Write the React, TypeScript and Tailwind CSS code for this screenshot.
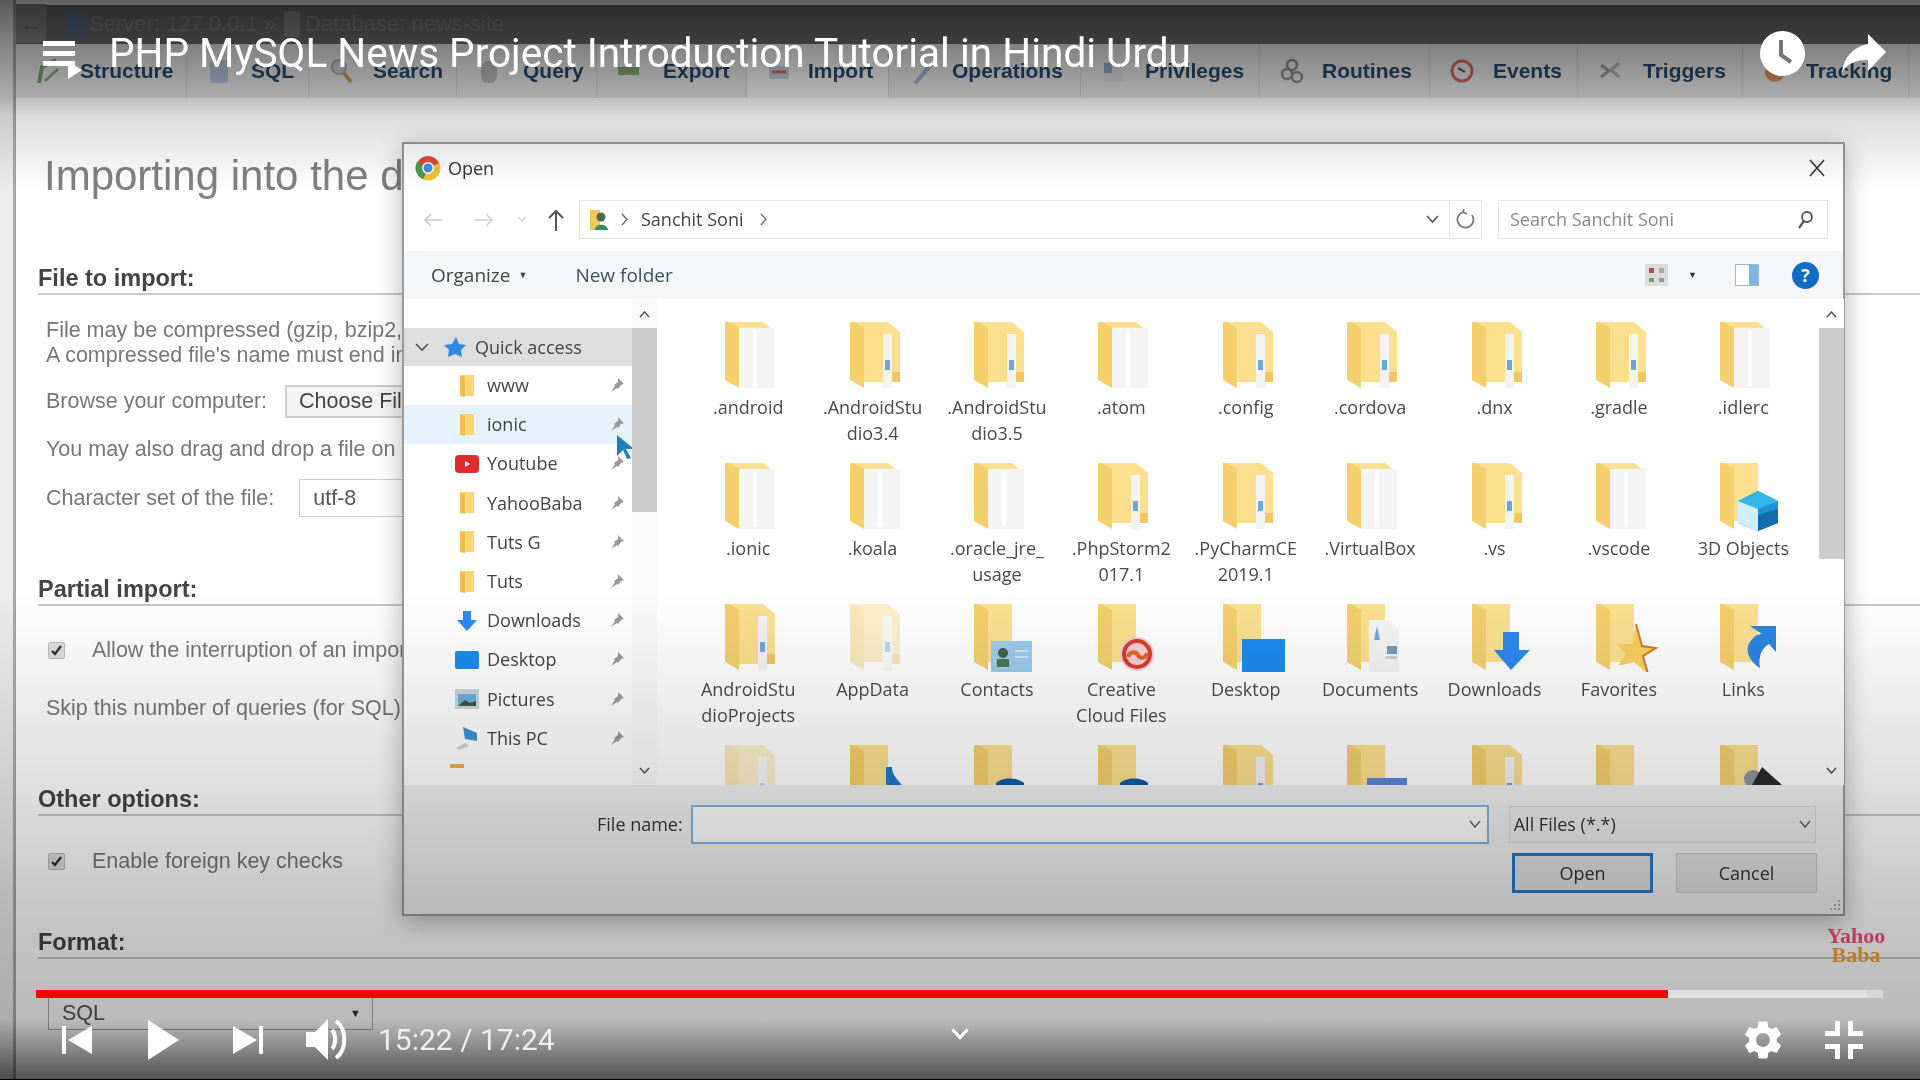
import React from "react";
import { MdSettings } from "react-icons/md";

type Kind =
  | "paper" | "strip" | "faded" | "contacts" | "cc" | "desktop" | "docs" | "down" | "star"
  | "link" | "cube" | "note" | "dome" | "bar" | "plain" | "dark";

const files: { name: string; kind: Kind }[] = [
  { name: ".android", kind: "paper" },
  { name: ".AndroidStu\ndio3.4", kind: "strip" },
  { name: ".AndroidStu\ndio3.5", kind: "strip" },
  { name: ".atom", kind: "paper" },
  { name: ".config", kind: "strip" },
  { name: ".cordova", kind: "strip" },
  { name: ".dnx", kind: "strip" },
  { name: ".gradle", kind: "strip" },
  { name: ".idlerc", kind: "paper" },
  { name: ".ionic", kind: "paper" },
  { name: ".koala", kind: "paper" },
  { name: ".oracle_jre_\nusage", kind: "paper" },
  { name: ".PhpStorm2\n017.1", kind: "strip" },
  { name: ".PyCharmCE\n2019.1", kind: "strip" },
  { name: ".VirtualBox", kind: "paper" },
  { name: ".vs", kind: "strip" },
  { name: ".vscode", kind: "paper" },
  { name: "3D Objects", kind: "cube" },
  { name: "AndroidStu\ndioProjects", kind: "strip" },
  { name: "AppData", kind: "faded" },
  { name: "Contacts", kind: "contacts" },
  { name: "Creative\nCloud Files", kind: "cc" },
  { name: "Desktop", kind: "desktop" },
  { name: "Documents", kind: "docs" },
  { name: "Downloads", kind: "down" },
  { name: "Favorites", kind: "star" },
  { name: "Links", kind: "link" },
  { name: "", kind: "faded" },
  { name: "", kind: "note" },
  { name: "", kind: "dome" },
  { name: "", kind: "dome" },
  { name: "", kind: "strip" },
  { name: "", kind: "bar" },
  { name: "", kind: "strip" },
  { name: "", kind: "plain" },
  { name: "", kind: "dark" },
];

const tabs = [
  { label: "Structure", w: "w-[171px]", ml: "ml-[20px]" },
  { label: "SQL", w: "w-[122px]", ml: "ml-[20px]" },
  { label: "Search", w: "w-[148px]", ml: "ml-[20px]" },
  { label: "Query", w: "w-[140px]", ml: "ml-[22px]" },
  { label: "Export", w: "w-[150px]", ml: "ml-[22px]" },
  { label: "Import", w: "w-[142px]", ml: "ml-[17px]", active: true },
  { label: "Operations", w: "w-[192px]", ml: "ml-[19px]" },
  { label: "Privileges", w: "w-[179px]", ml: "ml-[20px]" },
  { label: "Routines", w: "w-[170px]", ml: "ml-[18px]" },
  { label: "Events", w: "w-[148px]", ml: "ml-[19px]" },
  { label: "Triggers", w: "w-[165px]", ml: "ml-[21px]" },
  { label: "Tracking", w: "w-[166px]", ml: "ml-[19px]" },
];

const quick = ["www", "ionic", "Youtube", "YahooBaba", "Tuts G", "Tuts", "Downloads", "Desktop", "Pictures", "This PC"];

function TabIcon({ name }: { name: string }) {
  return (
    <svg width="24" height="28" viewBox="0 0 24 28" className="shrink-0 opacity-80">
      {name === "Structure" && (
        <>
          <path d="M3 26L6 10L20 3" fill="none" stroke="#5d9a4a" strokeWidth="4" />
          <path d="M9 24L22 12" stroke="#7a9a70" strokeWidth="3" />
        </>
      )}
      {name === "SQL" && <rect x="3" y="3" width="18" height="23" rx="4" fill="#a8bcdc" />}
      {name === "Search" && (
        <>
          <circle cx="10" cy="10" r="7" fill="#c8d0d8" stroke="#999" strokeWidth="2" />
          <path d="M15 16L22 25" stroke="#d09038" strokeWidth="4" />
        </>
      )}
      {name === "Query" && <rect x="4" y="4" width="16" height="22" rx="7" fill="#b0b0b0" />}
      {name === "Export" && (
        <>
          <path d="M1 10H22V18H1Z" fill="#63a85a" />
          <path d="M5 14H19" stroke="#e05a4a" strokeWidth="2" />
        </>
      )}
      {name === "Import" && (
        <>
          <rect x="2" y="9" width="20" height="13" rx="2" fill="#b8c8e0" />
          <path d="M5 15H19" stroke="#e03a3a" strokeWidth="3" />
        </>
      )}
      {name === "Operations" && <path d="M4 26L20 6L23 10L8 27Z" fill="#8ea8d4" />}
      {name === "Privileges" && (
        <>
          <rect x="3" y="6" width="19" height="19" fill="#d8dce2" />
          <rect x="3" y="6" width="8" height="10" fill="#7f9cc8" />
        </>
      )}
      {name === "Routines" && (
        <>
          <circle cx="12" cy="8" r="5" fill="none" stroke="#777" strokeWidth="2.5" />
          <circle cx="7" cy="17" r="5" fill="none" stroke="#777" strokeWidth="2.5" />
          <circle cx="17" cy="20" r="5" fill="none" stroke="#777" strokeWidth="2.5" />
        </>
      )}
      {name === "Events" && (
        <>
          <circle cx="12" cy="14" r="10" fill="#eee" stroke="#d04848" strokeWidth="3" />
          <path d="M8 11L15 15" stroke="#444" strokeWidth="2.5" />
        </>
      )}
      {name === "Triggers" && (
        <>
          <path d="M3 8L11 14L3 20" fill="none" stroke="#8a8a8a" strokeWidth="3" />
          <path d="M21 6L13 13L21 20" fill="none" stroke="#a5a5a5" strokeWidth="3" />
        </>
      )}
      {name === "Tracking" && <circle cx="12" cy="15" r="10" fill="#d88040" />}
    </svg>
  );
}

function Folder({ kind }: { kind: Kind }) {
  const badge = !["paper", "strip", "faded"].includes(kind);
  return (
    <svg width="72" height="68" viewBox="0 0 72 68" className={kind === "faded" ? "opacity-45" : ""}>
      <path d={badge ? "M0 0H38V58H0Z" : "M0 0H38L50 10V58H0Z"} fill="#fbe08f" />
      {kind === "paper" && <path d="M14 6H50V66H14Z" fill="#f4f4f4" />}
      {kind === "paper" && <path d="M30 8V64" stroke="#ffffff" strokeWidth="4" />}
      {(kind === "strip" || kind === "faded") && (
        <>
          <path d="M33 12H42V66H33Z" fill="#f3f3f3" />
          <path d="M35 38H40V48H35Z" fill="#6ba8d8" />
          <path d="M42 50H50V60H42Z" fill="#f2c663" />
        </>
      )}
      <path d="M0 0H4L14 6V66L0 58Z" fill="#f4cf6c" />
      {kind === "strip" && <path d="M14 6H33V60H14Z" fill="#fbdf8c" />}
      {kind === "contacts" && (
        <>
          <rect x="17" y="37" width="41" height="32" fill="#9ccbec" />
          <circle cx="29" cy="49" r="5" fill="#46604a" />
          <rect x="23" y="55" width="12" height="8" fill="#3f7a55" />
          <rect x="41" y="46" width="13" height="2" fill="#cfe4f4" />
          <rect x="41" y="52" width="13" height="2" fill="#cfe4f4" />
        </>
      )}
      {kind === "cc" && (
        <>
          <circle cx="39" cy="50" r="17" fill="#f5d0d0" />
          <circle cx="39" cy="50" r="13" fill="none" stroke="#da3a32" strokeWidth="4" />
          <path d="M30 53c2-6 8-6 10-2s8 4 9-2" fill="none" stroke="#e8622c" strokeWidth="4" />
        </>
      )}
      {kind === "desktop" && <rect x="19" y="35" width="43" height="33" fill="#1d8cf0" />}
      {kind === "docs" && (
        <>
          <path d="M22 16H42L52 26V68H22Z" fill="#f4f4f4" />
          <path d="M30 22L27 36H33Z" fill="#6fa9dc" />
          <rect x="40" y="42" width="10" height="8" fill="#6f9cc0" />
          <rect x="38" y="52" width="12" height="3" fill="#d0d0d0" />
        </>
      )}
      {kind === "down" && <path d="M31 28H47V46H58L39 66L22 46H31Z" fill="#2c8af0" />}
      {kind === "star" && (
        <>
          <path d="M40 20L46 42L60 44L47 52L52 70L38 58L22 62L30 50L20 40L36 40Z" fill="#f8d060" />
          <path d="M40 20L46 42L60 44L47 52L52 70" fill="none" stroke="#d9792a" strokeWidth="2" />
        </>
      )}
      {kind === "link" && (
        <path d="M30 22H56V48L49 40C42 44 38 52 40 64C30 58 24 46 30 38C34 32 38 30 42 30L36 26Z" fill="#2c86e0" />
      )}
      {kind === "cube" && (
        <>
          <path d="M38 28L58 38V60L38 68L18 60V38Z" fill="#1a93d6" />
          <path d="M18 38L38 28L58 38L38 46Z" fill="#35b6ea" />
          <path d="M18 38L38 46V68L18 60Z" fill="#cfeefb" />
          <path d="M38 52L58 46V60L38 68Z" fill="#0f6fae" />
        </>
      )}
      {kind === "note" && <path d="M36 22H42C42 34 54 38 56 48H46C44 44 42 42 42 40V60H36Z" fill="#1f78cf" />}
      {kind === "dome" && <path d="M22 38C28 32 44 32 50 38V44H22Z" fill="#0d5ca8" />}
      {kind === "bar" && <rect x="20" y="33" width="40" height="8" fill="#5a86e0" />}
      {kind === "dark" && (
        <>
          <circle cx="33" cy="34" r="9" fill="#8a96a0" />
          <path d="M42 22L62 40H32Z" fill="#2a2a2a" />
        </>
      )}
    </svg>
  );
}

function Section({ title, cls }: { title: string; cls: string }) {
  return (
    <div className={`h-[42px] ml-[22px] flex items-end pb-[2px] border-b-2 border-[#c9c9c9] text-[23.5px] leading-[26px] font-bold text-[#444] ${cls}`}>
      {title}
    </div>
  );
}

function Check() {
  return (
    <span className="w-[17px] h-[17px] rounded-[2px] bg-[#dedede] border border-[#bbb] flex items-center justify-center">
      <svg width="13" height="13" viewBox="0 0 13 13">
        <path d="M2 7l3 3 6-8" fill="none" stroke="#333" strokeWidth="2.4" />
      </svg>
    </span>
  );
}

function Page() {
  return (
    <div className="flex h-full font-['Liberation_Sans',sans-serif]">
      <div className="w-[16px] shrink-0 bg-[#ececec] border-r-[3px] border-[#a8a8a8]" />
      <div className="flex-1 min-w-0 flex flex-col bg-white text-[21.5px] text-[#777]">
        <div className="h-[5px] bg-white" />
        <div className="h-[39px] flex items-center pb-[2px] bg-[#707070] text-[#888] text-[22px]">
          <div className="w-[30px] h-[39px] bg-[#8a8a8a] text-center text-[#666] leading-[39px]">←</div>
          <div className="w-[18px] h-[30px] ml-[22px] rounded-[3px] bg-[#5b7690]" />
          <span className="ml-[3px]">Server: 127.0.0.1</span>
          <span className="ml-[6px]">»</span>
          <div className="w-[16px] h-[26px] ml-[8px] rounded-[3px] bg-[#8d8d8d]" />
          <span className="ml-[5px]">Database: news-site</span>
        </div>
        <div className="h-[54px] flex bg-[#e9e9e9] text-[21px] font-bold text-[#274a70]">
          {tabs.map((t) => (
            <div
              key={t.label}
              className={`${t.w} pl-[20px] shrink-0 flex items-center border-r border-[#d5d5d5] ${t.active ? "bg-[#f6f6f6]" : ""}`}
            >
              <TabIcon name={t.label} />
              <span className={t.ml}>{t.label}</span>
            </div>
          ))}
        </div>
        <div className="h-[155px] pl-[28px] flex items-center text-[42px] text-[#808080]">Importing into the d</div>
        <Section title="File to import:" cls="" />
        <div className="mt-[23px] ml-[30px] leading-[25px] whitespace-nowrap">
          File may be compressed (gzip, bzip2,
          <br />
          A compressed file's name must end in
        </div>
        <div className="mt-[17px] ml-[30px] h-[33px] flex items-center">
          Browse your computer:
          <span className="ml-[18px] h-[33px] pl-[12px] pr-[10px] border-2 border-[#ccc] bg-[#f4f4f4] text-[#444] leading-[29px] whitespace-nowrap">Choose File</span>
        </div>
        <div className="mt-[19px] ml-[30px] h-[24px] leading-[24px] whitespace-nowrap">You may also drag and drop a file on</div>
        <div className="mt-[18px] ml-[30px] h-[38px] flex items-center">
          Character set of the file:
          <span className="ml-[25px] w-[200px] h-[38px] pl-[13px] border border-[#ccc] text-[#555] leading-[36px]">utf-8</span>
        </div>
        <Section title="Partial import:" cls="mt-[47px]" />
        <div className="mt-[32px] ml-[32px] h-[24px] flex items-center gap-[27px] whitespace-nowrap">
          <Check />
          Allow the interruption of an import
        </div>
        <div className="mt-[34px] ml-[30px] h-[24px] leading-[24px] whitespace-nowrap">Skip this number of queries (for SQL)</div>
        <Section title="Other options:" cls="mt-[54px]" />
        <div className="mt-[33px] ml-[32px] h-[24px] flex items-center gap-[27px]">
          <Check />
          Enable foreign key checks
        </div>
        <Section title="Format:" cls="mt-[44px]" />
        <div className="mt-[37px] ml-[32px] w-[325px] h-[34px] pl-[13px] pr-[11px] flex items-center justify-between border border-[#aaa] text-[#555]">
          SQL
          <span className="text-[11px] text-[#333]">▼</span>
        </div>
      </div>
    </div>
  );
}

function Dialog() {
  return (
    <div className="absolute left-[402px] top-[142px] w-[1443px] h-[774px] flex flex-col bg-white border-2 border-[#9a9a9a] shadow-[0_6px_24px_rgba(0,0,0,0.3)] font-['Open_Sans',sans-serif] text-[#444] text-[18px]">
      <div className="h-[48px] flex items-center pl-[11px] pr-[18px] shrink-0">
        <svg width="26" height="26" viewBox="0 0 26 26">
          <circle cx="13" cy="13" r="12" fill="#e0483a" />
          <path d="M13 13L24 8A12 12 0 0 1 8 24Z" fill="#f3c32f" />
          <path d="M13 13L8 24A12 12 0 0 1 2 7Z" fill="#4a9a4e" />
          <circle cx="13" cy="13" r="6" fill="#fff" />
          <circle cx="13" cy="13" r="4.5" fill="#4a8fe0" />
        </svg>
        <span className="ml-[7px] text-[#333]">Open</span>
        <svg className="ml-auto" width="16" height="18" viewBox="0 0 16 18">
          <path d="M1 1L15 17M15 1L1 17" stroke="#333" strokeWidth="1.6" />
        </svg>
      </div>
      <div className="h-[39px] mt-[8px] flex items-stretch shrink-0">
        <div className="w-[175px] flex items-center shrink-0">
          <svg className="ml-[19px]" width="20" height="14" viewBox="0 0 20 14">
            <path d="M19 7H2M8 1L2 7L8 13" fill="none" stroke="#c8c8c8" strokeWidth="1.6" />
          </svg>
          <svg className="ml-[31px]" width="20" height="14" viewBox="0 0 20 14">
            <path d="M1 7H18M12 1L18 7L12 13" fill="none" stroke="#d0d0d0" strokeWidth="1.6" />
          </svg>
          <svg className="ml-[23px]" width="10" height="7" viewBox="0 0 10 7">
            <path d="M1 1l4 4 4-4" fill="none" stroke="#d0d0d0" strokeWidth="1.5" />
          </svg>
          <svg className="ml-[20px]" width="18" height="24" viewBox="0 0 18 24">
            <path d="M9 23V3M2 10l7-7 7 7" fill="none" stroke="#555" strokeWidth="2" />
          </svg>
        </div>
        <div className="w-[903px] flex items-center border border-[#e6e6e6] shrink-0">
          <svg className="ml-[9px]" width="20" height="24" viewBox="0 0 20 24">
            <rect x="1" y="2" width="10" height="20" fill="#f0c860" />
            <circle cx="12" cy="9" r="4.5" fill="#4d6a50" />
            <path d="M6 22c0-7 12-7 13 0Z" fill="#3a8a68" />
          </svg>
          <svg className="ml-[12px]" width="8" height="13" viewBox="0 0 8 13">
            <path d="M1 1l5 5.5-5 5.5" fill="none" stroke="#666" strokeWidth="1.3" />
          </svg>
          <span className="ml-[12px]">Sanchit Soni</span>
          <svg className="ml-[16px]" width="8" height="13" viewBox="0 0 8 13">
            <path d="M1 1l5 5.5-5 5.5" fill="none" stroke="#666" strokeWidth="1.3" />
          </svg>
          <svg className="ml-auto mr-[10px]" width="13" height="9" viewBox="0 0 13 9">
            <path d="M1 1l5.5 6L12 1" fill="none" stroke="#555" strokeWidth="1.6" />
          </svg>
          <div className="w-[32px] h-full flex items-center justify-center border-l border-[#e6e6e6]">
            <svg width="20" height="22" viewBox="0 0 20 22">
              <path d="M7 3A8 8 0 1 0 16 6M7 3l1-3M7 3l4 2" fill="none" stroke="#777" strokeWidth="1.8" />
            </svg>
          </div>
        </div>
        <div className="w-[330px] ml-[16px] flex items-center justify-between pl-[11px] pr-[13px] border border-[#e6e6e6] text-[#888] shrink-0">
          Search Sanchit Soni
          <svg width="18" height="20" viewBox="0 0 18 20">
            <circle cx="11" cy="7" r="5" fill="none" stroke="#555" strokeWidth="1.8" />
            <path d="M8 11L3 18" stroke="#555" strokeWidth="2.2" />
          </svg>
        </div>
      </div>
      <div className="h-[48px] mt-[12px] flex items-center pl-[27px] pr-[24px] bg-[#f5f6f7] shrink-0 text-[19px]">
        <span>Organize</span>
        <span className="ml-[8px] text-[9px]">▼</span>
        <span className="ml-[48px] text-[#3b5068]">New folder</span>
        <div className="ml-auto w-[23px] h-[22px] bg-[#dcdcdc] grid grid-cols-2 gap-[5px] p-[4px]">
          <span className="bg-[#b05050]" />
          <span className="bg-[#aaa]" />
          <span className="bg-[#6f9f6f]" />
          <span className="bg-[#999]" />
        </div>
        <span className="ml-[20px] text-[9px] text-[#333]">▼</span>
        <div className="ml-[38px] w-[24px] h-[22px] flex border border-[#9ab8d0] bg-white">
          <span className="flex-1" />
          <span className="w-[9px] bg-[#7fb5e0]" />
        </div>
        <span className="ml-[33px] w-[27px] h-[27px] rounded-full bg-[#0f6cc7] text-white text-center text-[18px] leading-[27px] font-bold">?</span>
      </div>
      <div className="h-[486px] flex shrink-0">
        <div className="w-[228px] relative shrink-0 flex flex-col overflow-hidden pt-[29px] text-[18px]">
          <div className="h-[38px] flex items-center shrink-0 bg-[#dedede]">
            <svg className="ml-[11px]" width="14" height="9" viewBox="0 0 14 9">
              <path d="M1 1l6 6 6-6" fill="none" stroke="#555" strokeWidth="1.6" />
            </svg>
            <svg className="ml-[14px]" width="24" height="22" viewBox="0 0 24 22">
              <path d="M13 1l3 7 7 1-5 5 1 7-7-3-7 3 1-7-5-5 8-1Z" fill="#2e8ae6" />
            </svg>
            <span className="ml-[8px]">Quick access</span>
          </div>
          {quick.map((q) => (
            <div key={q} className={`h-[39.2px] flex items-center shrink-0 relative ${q === "ionic" ? "bg-[#e5f3ff]" : ""}`}>
              <span className="w-[30px] ml-[48px] flex justify-center">
                <QuickIcon name={q} />
              </span>
              <span className="ml-[5px]">{q}</span>
              <svg className="absolute left-[205px] top-[11px]" width="16" height="16" viewBox="0 0 16 16">
                <path d="M9 1l6 6-3 1-3 4-1-1-6 4 4-6-1-1 4-3Z" fill="#999" />
              </svg>
            </div>
          ))}
          <span className="w-[14px] h-[4px] ml-[46px] mt-[6px] shrink-0 bg-[#f0b040]" />
          <svg className="absolute left-[212px] top-[135px]" width="20" height="26" viewBox="0 0 20 26">
            <path d="M1 1L18 15H10L15 24L11 25L7 16L1 22Z" fill="#2580b8" />
          </svg>
        </div>
        <Scrollbar track="bg-[#fafafa]" thumb="top-[29px] h-[184px]" />
        <div className="w-[1162px] pl-[29px] pt-[23px] overflow-hidden shrink-0">
          <div className="grid grid-cols-[repeat(9,124.4px)] auto-rows-[141px] text-[18px] leading-[26px] text-center text-[#4a4a4a]">
            {files.map((f, i) => (
              <div key={i} className="flex flex-col items-center">
                <div className="w-[72px] pl-[9px] -mr-[8px]">
                  <Folder kind={f.kind} />
                </div>
                <div className="mt-[4px] whitespace-pre-line">{f.name}</div>
              </div>
            ))}
          </div>
        </div>
        <Scrollbar track="bg-white" thumb="top-[29px] h-[231px]" />
      </div>
      <div className="flex-1 relative bg-[#f0f0f0] pl-[193px]">
        <div className="flex items-center mt-[20px] h-[39px]">
          <span className="text-[#333]">File name:</span>
          <div className="w-[798px] ml-[8px] h-[39px] pr-[6px] flex items-center justify-end bg-white border-2 border-[#7eb4ea]">
            <Chevron />
          </div>
          <div className="w-[307px] ml-[20px] h-[37px] px-[4px] flex items-center justify-between bg-[#ececec] border border-[#d5d5d5] text-[#333]">
            All Files (*.*)
            <Chevron />
          </div>
        </div>
        <div className="flex mt-[9px] ml-[915px] gap-[23px]">
          <div className="w-[141px] h-[40px] flex items-center justify-center bg-[#e1e1e1] border-[3px] border-[#2a78c8] text-[#333]">Open</div>
          <div className="w-[141px] h-[40px] flex items-center justify-center bg-[#e1e1e1] border border-[#c8c8c8] text-[#333]">Cancel</div>
        </div>
        <svg className="absolute right-[2px] bottom-[2px]" width="14" height="14" viewBox="0 0 14 14">
          <path d="M11 2h2v2h-2zM7 6h2v2H7zM11 6h2v2h-2zM3 10h2v2H3zM7 10h2v2H7zM11 10h2v2h-2z" fill="#aaa" />
        </svg>
      </div>
    </div>
  );
}

function Chevron() {
  return (
    <svg width="12" height="9" viewBox="0 0 12 9">
      <path d="M1 1l5 6 5-6" fill="none" stroke="#666" strokeWidth="1.5" />
    </svg>
  );
}

function QuickIcon({ name }: { name: string }) {
  if (name === "Youtube")
    return (
      <svg width="24" height="18" viewBox="0 0 24 18">
        <rect width="24" height="18" rx="4" fill="#e02b2b" />
        <path d="M10 6l5 3-5 3Z" fill="#fff" />
      </svg>
    );
  if (name === "Downloads")
    return (
      <svg width="22" height="22" viewBox="0 0 22 22">
        <path d="M7 1H15V10H21L11 21L1 10H7Z" fill="#2c8af0" />
      </svg>
    );
  if (name === "Desktop") return <span className="w-[24px] h-[18px] rounded-[2px] bg-[#1d8cf0]" />;
  if (name === "Pictures")
    return (
      <svg width="24" height="20" viewBox="0 0 24 20">
        <rect width="24" height="20" fill="#c9d6e0" />
        <rect x="3" y="5" width="18" height="12" fill="#6fb0d8" />
        <path d="M3 17l7-6 5 3 6-2v5Z" fill="#3a5a4a" />
      </svg>
    );
  if (name === "This PC")
    return (
      <svg width="24" height="24" viewBox="0 0 24 24">
        <path d="M8 1L22 7V15L10 13Z" fill="#3a92d8" />
        <path d="M1 22L10 17L14 20L4 24Z" fill="#cfd4d8" />
      </svg>
    );
  return (
    <svg width="14" height="24" viewBox="0 0 14 24">
      <path d="M0 1H14V22H0Z" fill="#f8d670" />
      <path d="M0 1L5 3V23L0 22Z" fill="#efc04e" />
    </svg>
  );
}

function Scrollbar({ track, thumb }: { track: string; thumb: string }) {
  return (
    <div className={`w-[25px] relative shrink-0 ${track}`}>
      <svg className="absolute left-[7px] top-[12px]" width="11" height="7" viewBox="0 0 11 7">
        <path d="M1 6l4.5-5L10 6" fill="none" stroke="#555" strokeWidth="1.5" />
      </svg>
      <div className={`absolute left-0 w-full bg-[#cdcdcd] ${thumb}`} />
      <svg className="absolute left-[7px] top-[468px]" width="11" height="7" viewBox="0 0 11 7">
        <path d="M1 1l4.5 5L10 1" fill="none" stroke="#555" strokeWidth="1.5" />
      </svg>
    </div>
  );
}

function Player() {
  return (
    <div className="absolute inset-0 flex flex-col justify-between text-white font-['Roboto',sans-serif] bg-[linear-gradient(180deg,rgba(0,0,0,0.62)_0px,rgba(0,0,0,0.45)_44px,rgba(0,0,0,0.26)_98px,rgba(0,0,0,0.14)_115px,rgba(0,0,0,0)_190px,rgba(0,0,0,0)_590px,rgba(0,0,0,0.13)_790px,rgba(0,0,0,0.22)_900px,rgba(0,0,0,0.27)_1020px,rgba(0,0,0,0.68)_1079px)]">
      <div className="h-[106px] flex items-center blur-[0.3px]">
        <div className="relative w-[32px] ml-[43px] flex flex-col gap-[5px]">
          <span className="h-[5px] bg-white" />
          <span className="h-[5px] bg-white" />
          <span className="h-[5px] bg-white" />
          <svg className="absolute left-[25px] top-[20px]" width="14" height="18" viewBox="0 0 14 18">
            <path d="M0 0L14 9L0 18Z" fill="#fff" />
          </svg>
        </div>
        <div className="ml-[34px] text-[40.5px] leading-[46px] whitespace-nowrap">PHP MySQL News Project Introduction Tutorial in Hindi Urdu</div>
        <svg className="ml-auto" width="45" height="45" viewBox="0 0 45 45">
          <circle cx="22.5" cy="22.5" r="22.5" fill="#fff" />
          <path d="M21 9V24L31 31" fill="none" stroke="#777" strokeWidth="4" />
        </svg>
        <svg className="ml-[37px] mr-[34px]" width="44" height="38" viewBox="0 0 44 38">
          <path d="M26 0L44 18L26 37V26C14 26 6 29 0 38C2 24 10 13 26 10Z" fill="#fff" />
        </svg>
      </div>
      <div className="h-[90px] relative flex flex-col blur-[0.3px]">
        <div className="h-[8px] ml-[36px] w-[1847px] flex bg-[#e2e2e2]/70">
          <span className="w-[1632px] bg-[#ff0000]" />
          <span className="w-[199px] bg-[#e0e0e0]" />
        </div>
        <div className="h-[81px] flex items-center pt-[2px]">
          <svg className="ml-[62px]" width="30" height="28" viewBox="0 0 30 28">
            <rect width="4" height="28" fill="#fff" />
            <path d="M30 0V28L6 14Z" fill="#fff" />
          </svg>
          <svg className="ml-[56px]" width="31" height="40" viewBox="0 0 31 40">
            <path d="M0 0L31 20L0 40Z" fill="#fff" />
          </svg>
          <svg className="ml-[54px]" width="30" height="28" viewBox="0 0 30 28">
            <path d="M0 0L24 14L0 28Z" fill="#fff" />
            <rect x="26" width="4" height="28" fill="#fff" />
          </svg>
          <svg className="ml-[43px]" width="43" height="43" viewBox="0 0 43 43">
            <path d="M0 14H9L22 1V42L9 29H0Z" fill="#fff" />
            <path d="M26 12C30 16 30 27 26 31" fill="none" stroke="#fff" strokeWidth="4" />
            <path d="M30 3C41 11 41 32 30 40" fill="none" stroke="#fff" strokeWidth="4" />
          </svg>
          <span className="ml-[29px] text-[30px] text-[#eeeeee] whitespace-nowrap">15:22 / 17:24</span>
          <svg className="absolute left-[951px] top-[38px]" width="18" height="12" viewBox="0 0 18 12">
            <path d="M1.5 1.5L9 9.5L16.5 1.5" fill="none" stroke="#fff" strokeWidth="3" />
          </svg>
          <MdSettings className="ml-auto text-[#fff]" size={46} />
          <svg className="ml-[39px] mr-[57px]" width="38" height="38" viewBox="0 0 38 38">
            <path d="M10 0H15V15H0V10H10ZM23 0H28V10H38V15H23ZM0 23H15V38H10V28H0ZM23 23H38V28H28V38H23Z" fill="#fff" />
          </svg>
        </div>
        <div className="h-[1px] bg-black" />
      </div>
    </div>
  );
}

export default function App() {
  return (
    <div className="relative w-[1920px] h-[1080px] overflow-hidden bg-white">
      <div className="absolute inset-0 blur-[0.7px]">
        <Page />
        <Dialog />
        <div className="absolute left-[1826px] top-[926px] w-[60px] flex flex-col items-center font-['Liberation_Serif',serif] font-bold text-[22px] leading-[19px]">
          <span className="text-[#f4507e]">Yahoo</span>
          <span className="text-[#f3a43c]">Baba</span>
        </div>
      </div>
      <Player />
    </div>
  );
}
